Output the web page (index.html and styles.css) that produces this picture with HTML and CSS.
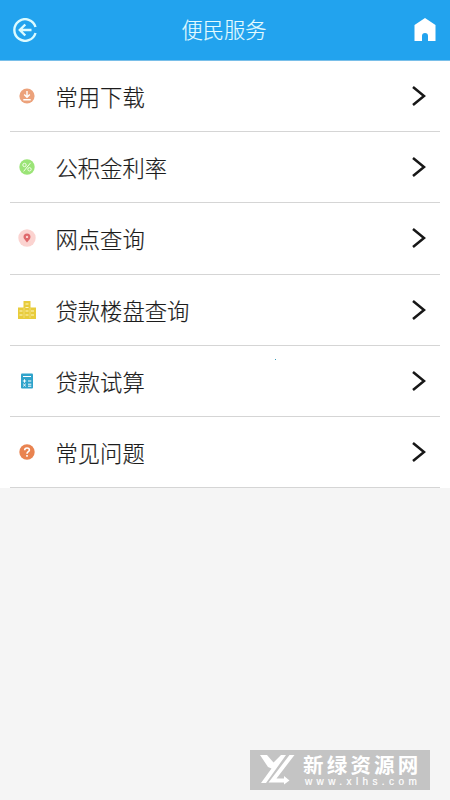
FILE: index.html
```html
<!DOCTYPE html>
<html lang="zh-CN">
<head>
<meta charset="utf-8">
<title>便民服务</title>
<link rel="stylesheet" href="styles.css">
</head>
<body>
<header class="bar">
  <svg class="back" viewBox="0 0 24 24"><path d="M22.500 9A10.800 10.800 0 1 0 22.500 15M18.500 12H7M12.300 6.500L6.800 12l5.500 5.500"/></svg>
  <h1 class="title">便民服务</h1>
  <svg class="home" viewBox="0 0 22 24"><path d="M11 0L21.500 7V23H14V18a3 3 0 0 0-6 0v5H.5V7z"/></svg>
</header>
<main class="list">
  <a class="row">
    <svg class="icon" viewBox="0 0 20 20"><circle cx="10" cy="10" r="7.6" fill="#eca27b"/><path d="M10 5v6M7.200 8.400L10 11.200l2.800-2.800M6.300 13.800h7.400" fill="none" stroke="#fff" stroke-width="1.4"/></svg>
    <span class="label">常用下载</span>
    <svg class="arrow" viewBox="0 0 14 20"><path d="M1 1l11 9L1 19"/></svg>
  </a>
  <a class="row">
    <svg class="icon" viewBox="0 0 20 20"><circle cx="10" cy="10" r="7.7" fill="#9be477"/><g fill="none" stroke="#f4ffe9" stroke-width="1"><circle cx="7.500" cy="8" r="1.700"/><circle cx="12.500" cy="12.300" r="1.700"/><path d="M13.600 5.800l-7 8.600"/></g></svg>
    <span class="label">公积金利率</span>
    <svg class="arrow" viewBox="0 0 14 20"><path d="M1 1l11 9L1 19"/></svg>
  </a>
  <a class="row">
    <svg class="icon" viewBox="0 0 20 20"><circle cx="10" cy="10" r="8.7" fill="#fbd3d0"/><path d="M10 14.500C8 11.700 6.500 10.500 6.500 8.900a3.500 3.500 0 0 1 7 0c0 1.700-1.500 2.900-3.500 5.600z" fill="#df686b"/><circle cx="10" cy="8.900" r="1.200" fill="#fbd3d0"/></svg>
    <span class="label">网点查询</span>
    <svg class="arrow" viewBox="0 0 14 20"><path d="M1 1l11 9L1 19"/></svg>
  </a>
  <a class="row">
    <svg class="icon" viewBox="0 0 20 20"><path d="M6.500 1h7v6.500h5.500V19H1V7.500h5.500z" fill="#e8cc3b"/><path d="M8.500 4h3M8.500 7.500h3M2.500 11h3M8.500 11h3M14 11h3M2.500 15h3M8.500 15h3M14 15h3" fill="none" stroke="#fff6c4" stroke-width="1.100"/><path d="M7 8v10M13 8v10" stroke="#f7eaa0" stroke-width=".6"/></svg>
    <span class="label">贷款楼盘查询</span>
    <svg class="arrow" viewBox="0 0 14 20"><path d="M1 1l11 9L1 19"/></svg>
  </a>
  <a class="row">
    <svg class="icon" viewBox="0 0 20 20"><rect x="4" y="2.500" width="12" height="15" rx="1" fill="#2fa3cb"/><path d="M6 5.500h8M5.800 10h3.400M7.500 8.300v3.400M11 10h3.300M6.200 12.800l2.600 2.600M8.800 12.800l-2.600 2.600M11 13.200h3.300M11 15.200h3.300" fill="none" stroke="#fff" stroke-width="1"/></svg>
    <span class="label">贷款试算</span>
    <svg class="arrow" viewBox="0 0 14 20"><path d="M1 1l11 9L1 19"/></svg>
  </a>
  <a class="row">
    <svg class="icon" viewBox="0 0 20 20"><circle cx="10" cy="10" r="7.700" fill="#e98350"/><path d="M7.700 8.200c0-3 4.700-2.900 4.700-.2 0 1.700-2.400 1.700-2.400 3.700M10 13v1.700" fill="none" stroke="#fff" stroke-width="1.600"/></svg>
    <span class="label">常见问题</span>
    <svg class="arrow" viewBox="0 0 14 20"><path d="M1 1l11 9L1 19"/></svg>
  </a>
  <i class="speck"></i>
</main>
<aside class="mark">
  <svg class="logo" viewBox="0 0 38 32"><path d="M0 1h7l6.500 7.500L21 1h5L6 29H1L11.500 14.500 8 13zM29.500 1h5L16.500 24.500H24V22l5.500 4.500-5.500 4V28.500H8.500z"/></svg>
  <div class="words">
    <div class="name">新绿资源网</div>
    <div class="url">www.xlhs.com</div>
  </div>
</aside>
</body>
</html>
```
FILE: styles.css
```css
* { box-sizing: border-box; }

body {
  margin: 0;
  height: 800px;
  overflow: hidden;
  background: #f5f5f5;
  color: #1c1c1c;
  font-family: "Noto Sans CJK SC", sans-serif;
}

.bar {
  display: flex;
  align-items: center;
  justify-content: space-between;
  height: 61px;
  padding: 0 14px 0 13px;
  background: #22a3ee;
  border-bottom: 1px solid #79bfe9;
}

.back {
  width: 24px;
  height: 24px;
  fill: none;
  stroke: #dcfbff;
  stroke-width: 2.4;
}

.title {
  margin: 0 3px 2px 0;
  font-size: 21.3px;
  line-height: 30px;
  font-weight: 300;
  color: #e4fbff;
  -webkit-text-stroke: .15px #e4fbff;
}

.home {
  width: 22px;
  height: 24px;
  fill: #fff;
}

.list {
  position: relative;
  background: #fff;
}

.row {
  display: flex;
  align-items: center;
  height: 71.2px;
  margin: 0 10px;
  padding: 0 14px 0 7px;
  border-bottom: 1px solid #d5d5d5;
}

.icon {
  width: 20px;
  height: 20px;
}

.label {
  flex: 1;
  margin-left: 18.5px;
  font-size: 22.3px;
  line-height: 32px;
  font-weight: 300;
  -webkit-text-stroke: .2px #1c1c1c;
}

.arrow {
  width: 14px;
  height: 20px;
  fill: none;
  stroke: #171717;
  stroke-width: 2.5;
}

.speck {
  position: absolute;
  left: 275px;
  top: 298px;
  width: 1px;
  height: 1px;
  background: #3c9db9;
}

.mark {
  position: absolute;
  left: 250px;
  top: 750px;
  display: flex;
  width: 180px;
  height: 40px;
  padding: 4px 0 0 10px;
  background: #c4c4c4;
  color: #fff;
}

.logo {
  width: 38px;
  height: 32px;
  fill: #fff;
}

.words { margin-left: 5px; }

.name {
  margin-top: -1px;
  font-size: 20.5px;
  line-height: 22px;
  font-weight: 700;
  letter-spacing: 3.2px;
  white-space: nowrap;
}

.url {
  margin: 2px 0 0 2px;
  font: 10px/10px "Liberation Sans", sans-serif;
  letter-spacing: 4.4px;
  white-space: nowrap;
  -webkit-text-stroke: .2px #fff;
}
```
